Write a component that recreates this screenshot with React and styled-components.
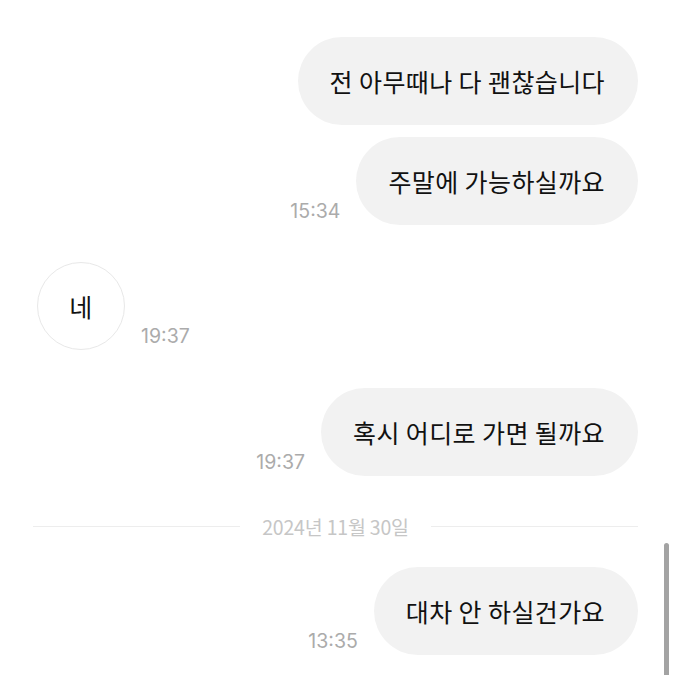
import React from 'react';
import styled, { createGlobalStyle } from 'styled-components';

const GlobalStyle = createGlobalStyle`
  html, body {
    margin: 0;
    padding: 0;
    background: #ffffff;
  }
  body {
    font-family: "Noto Sans CJK KR", "Noto Sans", sans-serif;
  }
`;

const Screen = styled.div`
  position: relative;
  width: 675px;
  height: 675px;
  overflow: hidden;
  background: #ffffff;
`;

const Thread = styled.div`
  display: flex;
  flex-direction: column;
  padding: 37px 37px 0 37px;
`;

// one message row, mine on the right, theirs on the left
const Row = styled.div`
  display: flex;
  flex-direction: ${(p) => (p.$mine ? 'row-reverse' : 'row')};
  align-items: flex-end;
  gap: 16px;
  margin-top: ${(p) => p.$gap || 0}px;
`;

const Bubble = styled.div`
  display: flex;
  align-items: center;
  justify-content: center;
  box-sizing: border-box;
  height: 88px;
  padding: 0 33px 0 32px;
  border-radius: 44px;
  background: #f2f2f2;
  color: #111111;
  font-size: 25px;
  letter-spacing: 0.4px;
  white-space: nowrap;
`;

const Circle = styled(Bubble)`
  width: 88px;
  padding: 0;
  background: #ffffff;
  border: 1px solid #e8e8e8;
`;

const Time = styled.span`
  padding-bottom: 2px;
  font-family: Inter, "Liberation Sans", sans-serif;
  font-size: 19.5px;
  color: #ababab;
`;

const Divider = styled.div`
  display: flex;
  align-items: center;
  gap: 22px;
  height: 20px;
  margin: 40px 0 0 -4px;
`;

const Line = styled.div`
  flex: 1;
  height: 1px;
  background: #ededed;
`;

const DateLabel = styled.span`
  font-size: 19.5px;
  color: #c6c6c6;
  letter-spacing: -0.2px;
`;

const Scrollbar = styled.div`
  position: absolute;
  right: 6px;
  top: 543px;
  bottom: 0;
  width: 5px;
  border-radius: 3px 3px 0 0;
  background: #a3a3a3;
`;

const messages = [
  { mine: true, text: '전 아무때나 다 괜찮습니다', gap: 0 },
  { mine: true, text: '주말에 가능하실까요', time: '15:34', gap: 12 },
  { mine: false, text: '네', time: '19:37', gap: 37, circle: true },
  { mine: true, text: '혹시 어디로 가면 될까요', time: '19:37', gap: 38 },
];

export default function App() {
  return (
    <Screen>
      <GlobalStyle />
      <Thread>
        {messages.map((m, i) => (
          <Row key={i} $mine={m.mine} $gap={m.gap}>
            {m.circle ? <Circle>{m.text}</Circle> : <Bubble>{m.text}</Bubble>}
            {m.time && <Time>{m.time}</Time>}
          </Row>
        ))}
        <Divider>
          <Line />
          <DateLabel>2024년 11월 30일</DateLabel>
          <Line />
        </Divider>
        <Row $mine $gap={31}>
          <Bubble>대차 안 하실건가요</Bubble>
          <Time>13:35</Time>
        </Row>
      </Thread>
      <Scrollbar />
    </Screen>
  );
}
